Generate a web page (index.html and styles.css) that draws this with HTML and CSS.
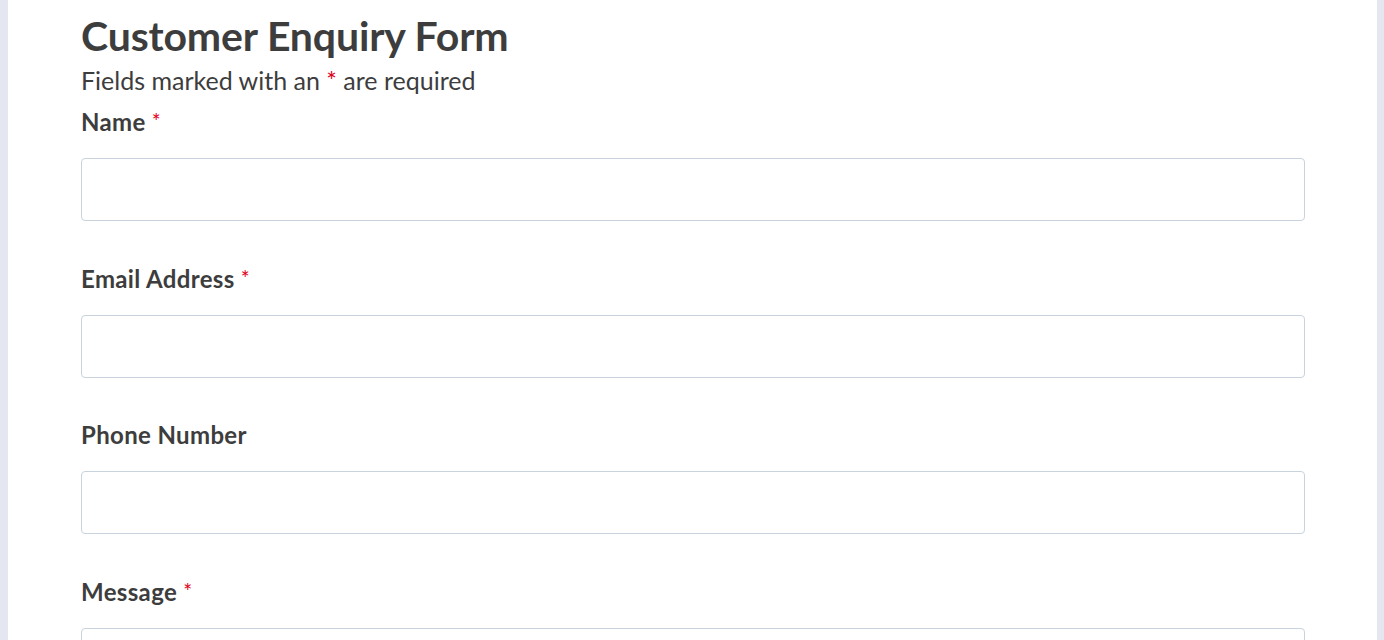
FILE: index.html
```html
<!DOCTYPE html>
<html lang="en">
<head>
  <meta charset="UTF-8" />
  <title>Customer Enquiry Form</title>
  <link rel="stylesheet" href="styles.css">
</head>
<body>
  <div class="page">
    <form class="enquiry">
      <h1>Customer Enquiry Form</h1>
      <p class="hint">Fields marked with an <span class="req">*</span> are required</p>

      <div class="field">
        <label for="name">Name <span class="req">*</span></label>
        <input type="text" id="name">
      </div>

      <div class="field">
        <label for="email">Email Address <span class="req">*</span></label>
        <input type="email" id="email">
      </div>

      <div class="field">
        <label for="phone">Phone Number</label>
        <input type="tel" id="phone">
      </div>

      <div class="field">
        <label for="message">Message <span class="req">*</span></label>
        <textarea id="message" rows="5"></textarea>
      </div>
    </form>
  </div>
</body>
</html>
```

FILE: styles.css
```css
/* --- tokens --- */
:root {
  --text: #3d3d3d;
  --req: #e0001b;
  --line: #c9d3de;
  --edge: #e4e7f0;
}

* { box-sizing: border-box; margin: 0; padding: 0; }

body {
  font-family: Lato, "Open Sans", sans-serif;
  background: var(--edge);
  color: var(--text);
}

.page {
  background: #fff;
  margin: 0 7px 0 8px;
  min-height: 100vh;
  padding: 12px 0 0 73px;
}

.enquiry { width: 1224px; }

h1 {
  font-size: 41px;
  font-weight: 700;
  line-height: 48px;
  letter-spacing: -0.15px;
}

.hint {
  font-size: 25px;
  line-height: 34px;
  margin: 3px 0 8px;
}

.req { color: var(--req); }

.field { margin-bottom: 41px; }

label {
  display: block;
  font-size: 24px;
  font-weight: 700;
  line-height: 32px;
  letter-spacing: 0.35px;
  margin-bottom: 20px;
}
label .req { font-weight: 400; font-size: 21px; vertical-align: 2px; }

input, textarea {
  display: block;
  width: 100%;
  height: 63px;
  border: 1px solid var(--line);
  border-radius: 4px;
  font: inherit;
  font-size: 20px;
  padding: 0 14px;
}
textarea { height: 160px; resize: vertical; }
```
